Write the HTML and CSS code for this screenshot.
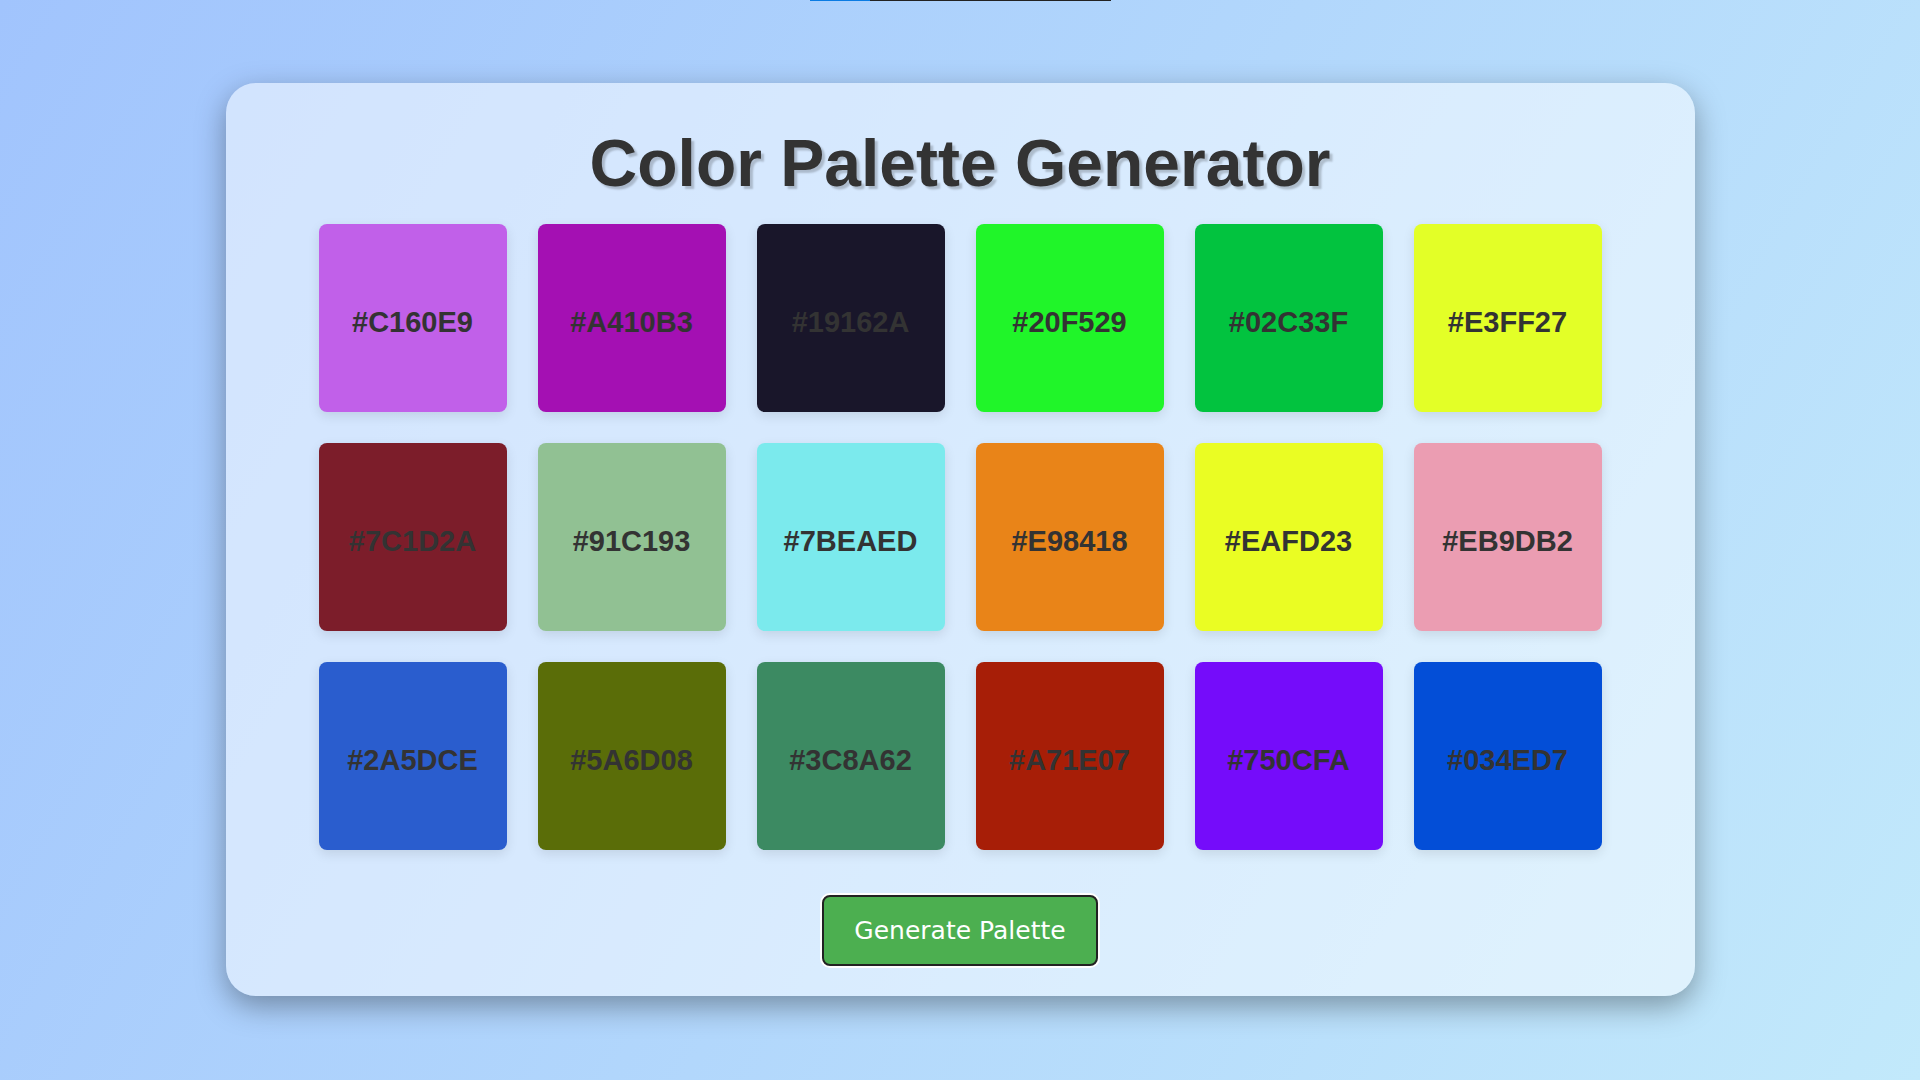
FILE: index.html
```html
<!DOCTYPE html>
<html lang="en">
<head>
    <meta charset="UTF-8">
    <meta name="viewport" content="width=device-width, initial-scale=1.0">
    <title>Color Palette Generator</title>
    <link rel="stylesheet" href="styles.css">
</head>
<body>

    <div class="top-bar">
        <div class="top-bar-fill"></div>
    </div>

    <div class="card">
        <h1 class="title">Color Palette Generator</h1>

        <div class="palette" id="palette">
            <div class="swatch" style="background: #C160E9;">#C160E9</div>
            <div class="swatch" style="background: #A410B3;">#A410B3</div>
            <div class="swatch" style="background: #19162A;">#19162A</div>
            <div class="swatch" style="background: #20F529;">#20F529</div>
            <div class="swatch" style="background: #02C33F;">#02C33F</div>
            <div class="swatch" style="background: #E3FF27;">#E3FF27</div>
            <div class="swatch" style="background: #7C1D2A;">#7C1D2A</div>
            <div class="swatch" style="background: #91C193;">#91C193</div>
            <div class="swatch" style="background: #7BEAED;">#7BEAED</div>
            <div class="swatch" style="background: #E98418;">#E98418</div>
            <div class="swatch" style="background: #EAFD23;">#EAFD23</div>
            <div class="swatch" style="background: #EB9DB2;">#EB9DB2</div>
            <div class="swatch" style="background: #2A5DCE;">#2A5DCE</div>
            <div class="swatch" style="background: #5A6D08;">#5A6D08</div>
            <div class="swatch" style="background: #3C8A62;">#3C8A62</div>
            <div class="swatch" style="background: #A71E07;">#A71E07</div>
            <div class="swatch" style="background: #750CFA;">#750CFA</div>
            <div class="swatch" style="background: #034ED7;">#034ED7</div>
        </div>

        <button class="generate-btn" onclick="generatePalette()">Generate Palette</button>
    </div>

    <script>
        // Random hex color like #A1B2C3
        function randomColor() {
            let hex = Math.floor(Math.random() * 0xffffff).toString(16).toUpperCase();
            return "#" + hex.padStart(6, "0");
        }

        // Refill every swatch with a new color
        function generatePalette() {
            let swatches = document.querySelectorAll(".swatch");
            for (let swatch of swatches) {
                let color = randomColor();
                swatch.style.background = color;
                swatch.innerText = color;
            }
        }
    </script>

</body>
</html>
```

FILE: styles.css
```css
* {
    margin: 0;
    padding: 0;
    box-sizing: border-box;
}
body {
    min-height: 100vh;
    font-family: "Liberation Sans", Arial, sans-serif;
    background: linear-gradient(120deg, #a1c4fd 0%, #c2e9fb 100%);
    background-attachment: fixed;
}
.top-bar {
    width: 301px;
    height: 1px;
    margin: 0 auto;
    background: #222;
}
.top-bar-fill {
    width: 60px;
    height: 100%;
    background: #0a7be3;
}
.card {
    width: 1469px;
    margin: 82px auto 0;
    padding: 42px 0 30px;
    background: rgba(255, 255, 255, 0.5);
    border-radius: 30px;
    box-shadow: 0 10px 30px rgba(0, 0, 0, 0.35);
    text-align: center;
}
.title {
    margin-bottom: 23px;
    font-size: 66px;
    line-height: 76px;
    font-weight: bold;
    color: #333;
    text-shadow: 3px 3px 2px rgba(0, 0, 0, 0.2);
}
.palette {
    display: grid;
    grid-template-columns: repeat(6, 188px);
    gap: 31px;
    justify-content: center;
    margin-bottom: 45px;
}
.swatch {
    height: 188px;
    padding-top: 8px;
    border-radius: 8px;
    display: flex;
    justify-content: center;
    align-items: center;
    font-size: 29px;
    font-weight: bold;
    color: #333;
    box-shadow: 0 4px 12px rgba(0, 0, 0, 0.1);
}
.generate-btn {
    display: block;
    margin: 0 auto;
    padding: 0 30px;
    height: 71px;
    line-height: 67px;
    font-family: "DejaVu Sans", sans-serif;
    font-size: 25px;
    color: white;
    background: #4caf50;
    border: 2px solid #222;
    border-radius: 8px;
    box-shadow: 0 0 0 2px #fff;
    cursor: pointer;
}
.generate-btn:hover {
    background: #43a047;
}
```
